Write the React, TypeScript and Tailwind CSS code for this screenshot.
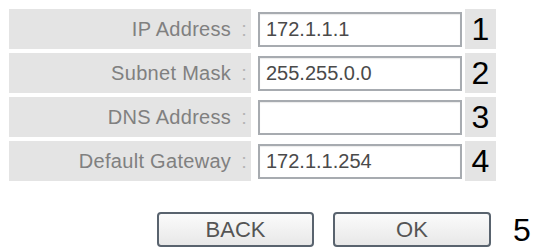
import React from 'react';

const rows = [
  { label: 'IP Address', value: '172.1.1.1', n: '1' },
  { label: 'Subnet Mask', value: '255.255.0.0', n: '2' },
  { label: 'DNS Address', value: '', n: '3' },
  { label: 'Default Gateway', value: '172.1.1.254', n: '4' },
];

export default function App() {
  return (
    <div className="w-[537px] h-[251px] bg-white overflow-hidden pl-[9px] pt-[9px] font-['Liberation_Sans',Arial,sans-serif]">
      <div className="grid grid-cols-[242px_210px_31px] gap-x-[2px] gap-y-[4px]">
        {rows.map((r) => (
          <React.Fragment key={r.n}>
            <div className="h-[40px] bg-[#e4e4e4] flex items-center justify-end pr-[4px] text-[20px] tracking-[0.3px] text-[#808080]">
              {r.label}
              <span className="ml-[10px] text-[#b5b5b5]">:</span>
            </div>
            <div className="h-[40px] bg-white flex items-center pl-[5px]">
              <div className="w-[204px] h-[35px] border-2 border-[#a7abb0] bg-white flex items-center pl-[6px] text-[20px] text-[#4a4a4a] shadow-[inset_0_1px_1px_rgba(0,0,0,0.08)]">
                {r.value}
              </div>
            </div>
            <div className="h-[40px] bg-[#e4e4e4] flex items-center justify-center text-[32px] leading-none text-black">
              {r.n}
            </div>
          </React.Fragment>
        ))}
      </div>
      <div className="flex items-center mt-[31px] pl-[148px]">
        <button className="w-[157px] h-[35px] rounded-[4px] border-2 border-[#59636e] bg-gradient-to-b from-[#fbfbfb] to-[#e8e8e8] text-[22px] leading-none text-[#555]">
          BACK
        </button>
        <button className="ml-[19px] w-[158px] h-[35px] rounded-[4px] border-2 border-[#59636e] bg-gradient-to-b from-[#fbfbfb] to-[#e8e8e8] text-[22px] leading-none text-[#555]">
          OK
        </button>
        <span className="ml-[22px] text-[32px] leading-none text-black">5</span>
      </div>
    </div>
  );
}
